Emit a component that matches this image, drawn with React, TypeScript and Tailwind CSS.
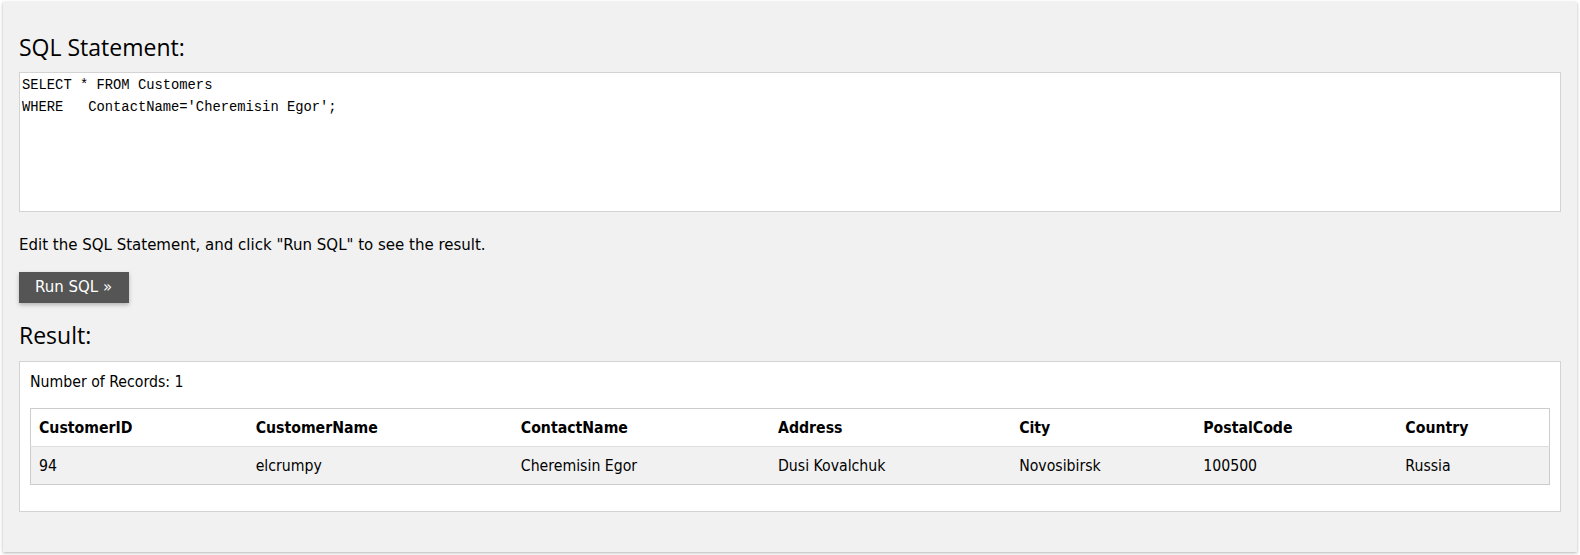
import { FC } from "react";

const columns = [
  { key: "CustomerID", w: "w-[217px]" },
  { key: "CustomerName", w: "w-[265px]" },
  { key: "ContactName", w: "w-[257px]" },
  { key: "Address", w: "w-[241px]" },
  { key: "City", w: "w-[184px]" },
  { key: "PostalCode", w: "w-[202px]" },
  { key: "Country", w: "w-[152px]" },
];

const rows = [
  ["94", "elcrumpy", "Cheremisin Egor", "Dusi Kovalchuk", "Novosibirsk", "100500", "Russia"],
];

const App: FC = () => {
  return (
    <div className="w-[1580px] h-[555px] bg-white pt-[2px] px-[3px] font-['DejaVu_Sans_Condensed','DejaVu_Sans',sans-serif] text-black">
      <div className="bg-[#f1f1f1] shadow-[0_1px_3px_rgba(0,0,0,0.3)] px-4 pt-[28px] pb-[40px]">
        <h3 className="font-['Open_Sans',sans-serif] text-[23px] leading-[34px] h-[34px]">SQL Statement:</h3>

        <div className="mt-[8px] h-[140px] bg-white border border-[#d3d3d3] px-[2px] pt-[2px]">
          <pre className="font-['Liberation_Mono',monospace] text-[13.8px] leading-[22px]">
            {"SELECT * FROM Customers\nWHERE   ContactName='Cheremisin Egor';"}
          </pre>
        </div>

        <p className="mt-[22px] font-['DejaVu_Sans',sans-serif] text-[15px] leading-[22px]">
          Edit the SQL Statement, and click "Run SQL" to see the result.
        </p>

        <button className="mt-[16px] h-[31px] w-[110px] bg-[#555555] text-white font-['DejaVu_Sans',sans-serif] text-[15px] shadow-[0_2px_4px_rgba(0,0,0,0.25)] text-left pl-4">
          Run SQL »
        </button>

        <h3 className="mt-[15px] font-['Open_Sans',sans-serif] text-[23px] leading-[34px] h-[34px]">Result:</h3>

        <div className="mt-[9px] bg-white border border-[#d3d3d3] px-[10px] pt-[10px] pb-[26px] text-[15.7px]">
          <div className="leading-[20px] h-[20px]">Number of Records: 1</div>
          <table className="mt-[16px] w-full border border-[#cccccc] border-collapse">
            <thead>
              <tr className="h-[38px] bg-white">
                {columns.map((c) => (
                  <th key={c.key} className={`${c.w} text-left font-bold pl-2`}>
                    {c.key}
                  </th>
                ))}
              </tr>
            </thead>
            <tbody>
              {rows.map((r, i) => (
                <tr key={i} className="h-[38px] bg-[#f1f1f1] border-t border-[#dddddd]">
                  {r.map((v, j) => (
                    <td key={j} className="pl-2">
                      {v}
                    </td>
                  ))}
                </tr>
              ))}
            </tbody>
          </table>
        </div>
      </div>
    </div>
  );
};

export default App;
